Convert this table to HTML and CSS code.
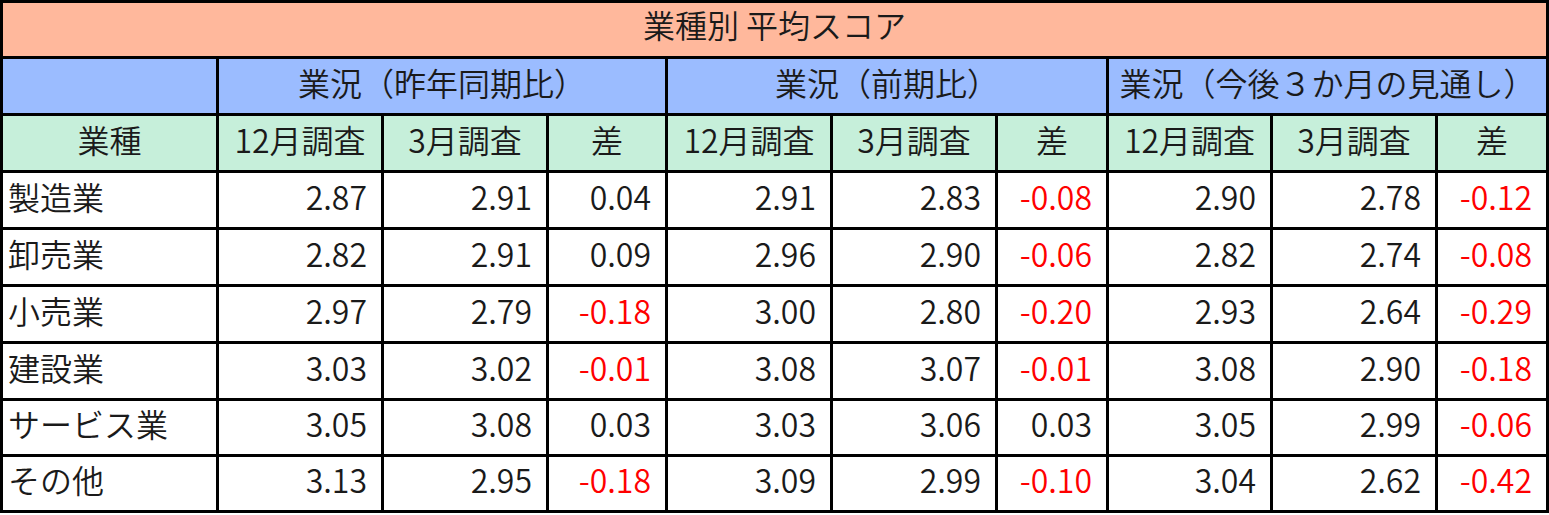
FILE: index.html
```html
<!DOCTYPE html>
<html lang="ja">
<head>
<meta charset="utf-8">
<title>業種別 平均スコア</title>
<link rel="stylesheet" href="styles.css">
</head>
<body>
<div class="table">
  <div class="cell title span-all">業種別 平均スコア</div>

  <div class="cell group"></div>
  <div class="cell group span3">業況（昨年同期比）</div>
  <div class="cell group span3">業況（前期比）</div>
  <div class="cell group span3">業況（今後３か月の見通し）</div>

  <div class="cell head">業種</div>
  <div class="cell head">12月調査</div>
  <div class="cell head">3月調査</div>
  <div class="cell head">差</div>
  <div class="cell head">12月調査</div>
  <div class="cell head">3月調査</div>
  <div class="cell head">差</div>
  <div class="cell head">12月調査</div>
  <div class="cell head">3月調査</div>
  <div class="cell head">差</div>

  <div class="cell name">製造業</div>
  <div class="cell num">2.87</div><div class="cell num">2.91</div><div class="cell num">0.04</div>
  <div class="cell num">2.91</div><div class="cell num">2.83</div><div class="cell num neg">-0.08</div>
  <div class="cell num">2.90</div><div class="cell num">2.78</div><div class="cell num neg">-0.12</div>

  <div class="cell name">卸売業</div>
  <div class="cell num">2.82</div><div class="cell num">2.91</div><div class="cell num">0.09</div>
  <div class="cell num">2.96</div><div class="cell num">2.90</div><div class="cell num neg">-0.06</div>
  <div class="cell num">2.82</div><div class="cell num">2.74</div><div class="cell num neg">-0.08</div>

  <div class="cell name">小売業</div>
  <div class="cell num">2.97</div><div class="cell num">2.79</div><div class="cell num neg">-0.18</div>
  <div class="cell num">3.00</div><div class="cell num">2.80</div><div class="cell num neg">-0.20</div>
  <div class="cell num">2.93</div><div class="cell num">2.64</div><div class="cell num neg">-0.29</div>

  <div class="cell name">建設業</div>
  <div class="cell num">3.03</div><div class="cell num">3.02</div><div class="cell num neg">-0.01</div>
  <div class="cell num">3.08</div><div class="cell num">3.07</div><div class="cell num neg">-0.01</div>
  <div class="cell num">3.08</div><div class="cell num">2.90</div><div class="cell num neg">-0.18</div>

  <div class="cell name">サービス業</div>
  <div class="cell num">3.05</div><div class="cell num">3.08</div><div class="cell num">0.03</div>
  <div class="cell num">3.03</div><div class="cell num">3.06</div><div class="cell num">0.03</div>
  <div class="cell num">3.05</div><div class="cell num">2.99</div><div class="cell num neg">-0.06</div>

  <div class="cell name">その他</div>
  <div class="cell num">3.13</div><div class="cell num">2.95</div><div class="cell num neg">-0.18</div>
  <div class="cell num">3.09</div><div class="cell num">2.99</div><div class="cell num neg">-0.10</div>
  <div class="cell num">3.04</div><div class="cell num">2.62</div><div class="cell num neg">-0.42</div>
</div>
</body>
</html>
```

FILE: styles.css
```css
html, body {
  margin: 0;
  padding: 0;
  background: #ffffff;
}

.table {
  display: grid;
  grid-template-columns: 213px 162px 162px 116px 162px 162px 108px 161px 162px 108px;
  grid-template-rows: 53px 54px 54px 54px 54px 54px 54px 53px 53px;
  gap: 3px;
  padding: 3px;
  width: max-content;
  background: #000000;
  font-family: "Noto Sans CJK JP", "Noto Sans", sans-serif;
  font-size: 32px;
  font-weight: 350;
  color: #1a1a1a;
}

.cell {
  display: flex;
  align-items: center;
  justify-content: center;
  box-sizing: border-box;
  padding-bottom: 9px;
  background: #ffffff;
  white-space: nowrap;
  overflow: visible;
  line-height: 1;
}

.span-all {
  grid-column: 1 / -1;
}

.span3 {
  grid-column: span 3;
}

.title {
  background: #ffb89c;
  padding-bottom: 12px;
}

.group {
  background: #9bbcff;
}

.head {
  background: #c6efda;
}

.name {
  justify-content: flex-start;
  padding-left: 5px;
}

.num {
  justify-content: flex-end;
  padding-right: 14px;
}

.neg {
  color: #ff0000;
}
```
